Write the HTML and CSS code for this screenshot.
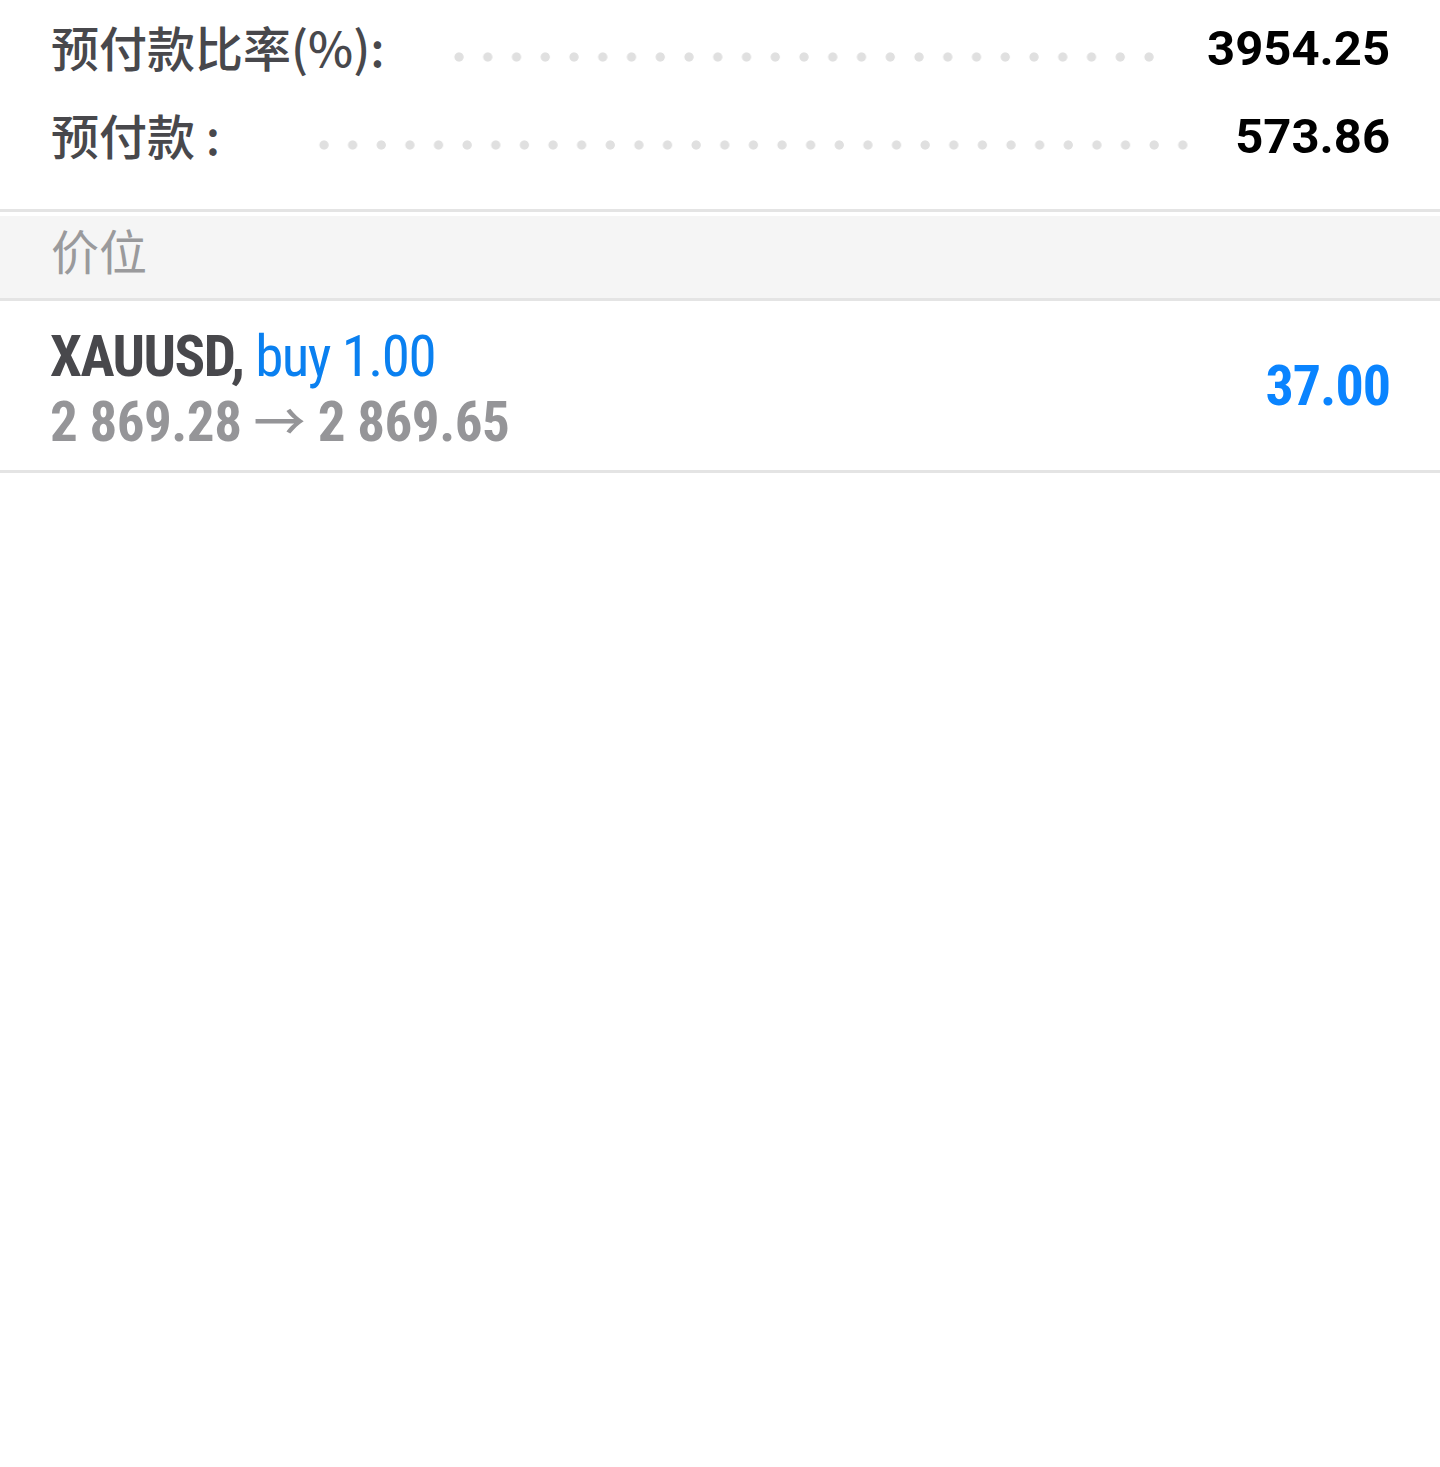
FILE: index.html
```html
<!DOCTYPE html>
<html lang="zh-CN">
	<head>
		<meta charset="UTF-8">
		<title>交易</title>
		<link rel="stylesheet" href="styles.css">
	</head>
	<body>
		<div class="summary">
			<div class="line">
				<span class="label">预付款比率(%):</span>
				<span class="dots"></span>
				<span class="value">3954.25</span>
			</div>
			<div class="line">
				<span class="label">预付款 :</span>
				<span class="dots dots-wide"></span>
				<span class="value">573.86</span>
			</div>
		</div>
		<div class="section">价位</div>
		<div class="position">
			<div class="pos-info">
				<div class="pos-title"><span class="symbol">XAUUSD,</span> <span class="dir">buy 1.00</span></div>
				<div class="pos-prices">2 869.28 <span class="arrow">→</span> 2 869.65</div>
			</div>
			<div class="profit">37.00</div>
		</div>
	</body>
</html>
```

FILE: styles.css
```css
body {
	margin: 0;
	background: #fff;
	font-family: "Noto Sans CJK SC", "Noto Sans", sans-serif;
}

.summary {
	padding: 4px 50px 29px 51px;
	border-bottom: 3px solid #e4e4e4;
}
.line {
	display: flex;
	align-items: center;
	height: 88px;
}
.label {
	font-size: 48px;
	font-weight: 500;
	color: #48484c;
	line-height: 1;
	margin-top: -5px;
}
.dots {
	flex: 1;
	align-self: stretch;
	margin: 0 44px 0 60px;
	background-image: radial-gradient(circle 5px at 14px 6px, #e0e0e0 4.2px, rgba(224, 224, 224, 0) 5px);
	background-size: 28px 12px;
	background-repeat: space no-repeat;
	background-position: 0 47px;
}
.dots-wide {
	margin-left: 90px;
	margin-right: 38px;
}
.value {
	font-family: Roboto, "Liberation Sans", sans-serif;
	font-weight: 700;
	font-size: 49px;
	color: #000;
}

.section {
	margin-top: 4px;
	height: 85px;
	box-sizing: border-box;
	display: flex;
	align-items: center;
	padding: 0 0 16px 51px;
	background: #f5f5f5;
	border-bottom: 3px solid #e4e4e4;
	font-size: 48px;
	color: #9a9a9c;
}

.position {
	display: flex;
	align-items: center;
	justify-content: space-between;
	height: 169px;
	padding: 0 50px;
	border-bottom: 3px solid #e4e4e4;
	font-family: Roboto, "Liberation Sans", sans-serif;
	font-stretch: condensed;
}
.pos-info {
	margin-top: 8px;
}
.pos-title {
	font-size: 57px;
	line-height: 62px;
	letter-spacing: -1.5px;
}
.symbol {
	font-weight: 700;
	color: #48484c;
}
.dir {
	color: #0a80f0;
}
.pos-prices {
	font-size: 55px;
	line-height: 62px;
	letter-spacing: -0.5px;
	font-weight: 700;
	color: #959598;
}
.arrow {
	font-family: "Noto Sans CJK SC", sans-serif;
	font-weight: 500;
	font-size: 52px;
	letter-spacing: 0;
}
.profit {
	font-size: 56px;
	font-weight: 700;
	letter-spacing: -1px;
	color: #0a84ff;
}
```
